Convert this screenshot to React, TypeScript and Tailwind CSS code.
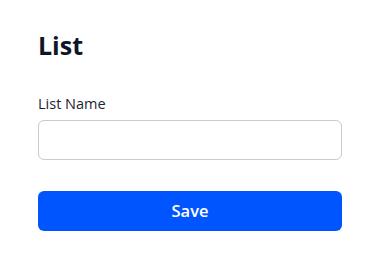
export default function App() {
  return (
    <div className="min-h-[256px] w-[370px] bg-white pl-[38px] pt-[29px] font-['Open_Sans',sans-serif]">
      <div className="w-[304px]">
        <h1 className="text-[25px] leading-[32px] font-bold text-[#0f1529]">List</h1>

        <div className="mt-[33px]">
          <label className="block text-[14.5px] leading-[20px] text-[#1f2433]">List Name</label>
          <input
            type="text"
            className="mt-[6px] block h-[40px] w-full rounded-[6px] border border-[#c6cbd6] bg-white px-3 text-[14px] outline-none"
          />
        </div>

        <button className="mt-[31px] h-[40px] w-full rounded-[6px] bg-[#0055ff] text-[16.5px] font-semibold text-white">
          Save
        </button>
      </div>
    </div>
  )
}
